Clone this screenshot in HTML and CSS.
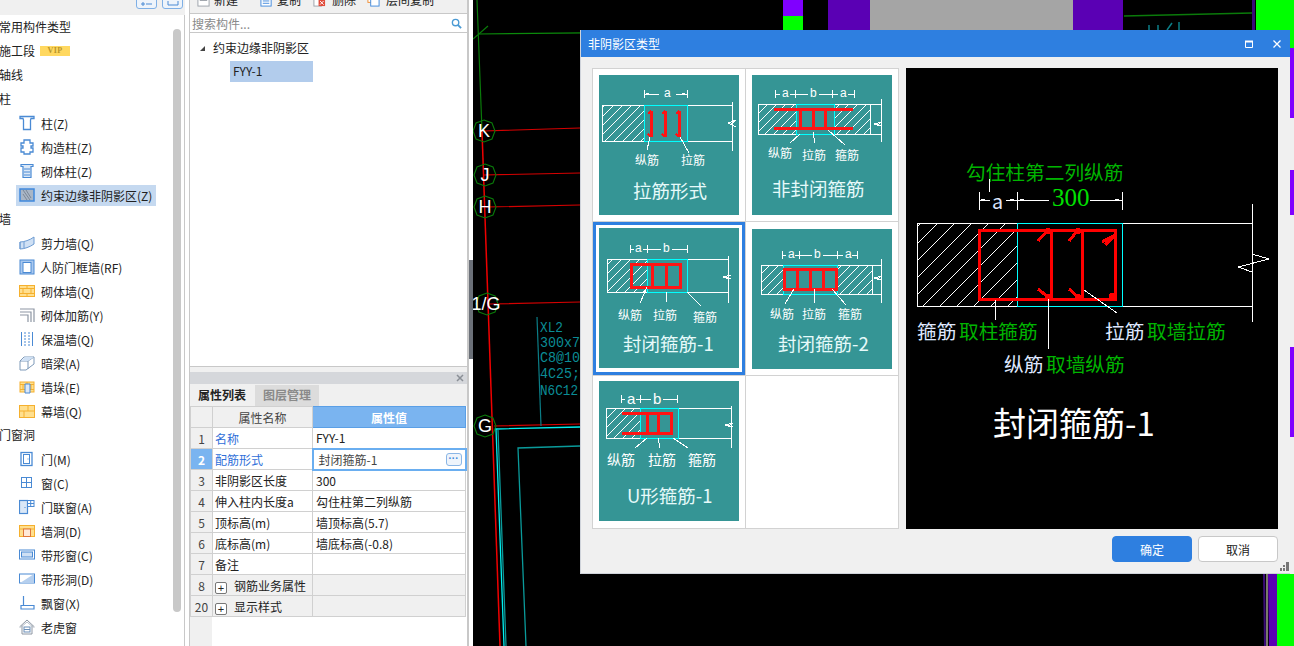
FILE: index.html
```html
<!DOCTYPE html>
<html lang="zh">
<head>
<meta charset="utf-8">
<title>非阴影区类型</title>
<link rel="stylesheet" href="styles.css">
</head>
<body>
<svg class="defs" width="0" height="0" aria-hidden="true">
  <defs>
    <pattern id="h1" width="9" height="9" patternUnits="userSpaceOnUse"><path d="M-1 10L10 -1" stroke="#fff" stroke-width="1"/></pattern>
    <pattern id="h2" width="17" height="17" patternUnits="userSpaceOnUse"><path d="M-1 18L18 -1" stroke="#fff" stroke-width="1"/></pattern>
    <pattern id="brick" width="16" height="16" patternUnits="userSpaceOnUse"><rect width="16" height="16" fill="#ffdf8e"/><path d="M0 5.5h16M0 10.5h16M8 0v5.5M4 5.5v5M12 5.5v5M8 10.5v6" stroke="#f5b02e" fill="none"/></pattern>
  </defs>
</svg>
<div class="app">
  <aside class="side">
    <div class="side-bar">
      <span class="side-btn"><svg width="14" height="6" viewBox="0 0 14 6"><path d="M2 2h2v2H2zM6 3h6" fill="none" stroke="#4a8ad4"/></svg></span>
      <span class="side-btn"><svg width="14" height="6" viewBox="0 0 14 6"><path d="M2 0v4h10V0" fill="none" stroke="#4a8ad4"/></svg></span>
    </div>
    <div class="tree-wrap">
      <div class="scroll-thumb"></div>
      <div class="hd">常用构件类型</div>
      <div class="hd">施工段<span class="vip">VIP</span></div>
      <div class="hd">轴线</div>
      <div class="hd">柱</div>
      <div class="it"><svg class="ic" viewBox="0 0 16 16"><path d="M1 1.5h14v2h-3l-.5 1.500v9.500h-7V5L4 3.500H1z" fill="#fff" stroke="#4a8ad4" stroke-width="1.300"/></svg><span>柱(Z)</span></div>
      <div class="it"><svg class="ic" viewBox="0 0 16 16"><path d="M5 1h6v3h3v3h-2v2h2v4h-3v2H5v-2H2V9h2V7H2V4h3z" fill="#fff" stroke="#4a8ad4" stroke-width="1.300"/></svg><span>构造柱(Z)</span></div>
      <div class="it"><svg class="ic" viewBox="0 0 16 16"><path d="M2 1.500h12v2h-2v11H4v-11H2z" fill="#dbe8f7" stroke="#4a8ad4" stroke-width="1.200"/><path d="M5 6h6M5 9h6M5 12h6" stroke="#4a8ad4"/></svg><span>砌体柱(Z)</span></div>
      <div class="it sel"><svg class="ic" viewBox="0 0 16 16"><rect x="1" y="2" width="14" height="12" fill="#a9b6c6" stroke="#3f88dc" stroke-width="1.500"/><path d="M4 3l7 10M7 3l5 8M4 7l4 6" stroke="#7b8796"/></svg><span>约束边缘非阴影区(Z)</span></div>
      <div class="hd">墙</div>
      <div class="it"><svg class="ic" viewBox="0 0 16 16"><path d="M1 7c4 0 10-2 14-5v7c-4 3-10 5-14 5z" fill="#cfe0f4" stroke="#6c9bd2"/><path d="M1 7l0 7M5 6.500v7" stroke="#6c9bd2"/></svg><span>剪力墙(Q)</span></div>
      <div class="it wide"><svg class="ic" viewBox="0 0 16 16"><rect x="1" y="1" width="14" height="14" fill="#a9c8ee" stroke="#4a8ad4"/><rect x="4" y="3.500" width="8" height="10" fill="#fff" stroke="#4a8ad4"/></svg><span>人防门框墙(RF)</span></div>
      <div class="it"><svg class="ic" viewBox="0 0 16 16"><rect x=".5" y="2.500" width="15" height="11" fill="url(#brick)" stroke="#f5b02e"/></svg><span>砌体墙(Q)</span></div>
      <div class="it"><svg class="ic" viewBox="0 0 16 16"><path d="M1 2h14v13M1 5h11v10M1 8h8v7" fill="none" stroke="#8d96a3" stroke-width="1.200"/></svg><span>砌体加筋(Y)</span></div>
      <div class="it"><svg class="ic" viewBox="0 0 16 16"><path d="M2.500 1v14M13.500 1v14" stroke="#4a8ad4"/><path d="M6 1v14M10 1v14" stroke="#4a8ad4" stroke-dasharray="2 1"/></svg><span>保温墙(Q)</span></div>
      <div class="it"><svg class="ic" viewBox="0 0 16 16"><path d="M1 6l4-4h10v7l-8 6H1z" fill="#fff" stroke="#7e9ab9"/><path d="M1 6h8l6-4M9 6v8" fill="none" stroke="#7e9ab9"/><path d="M2 6l4-4h9l-6 4z" fill="#cfe0f4"/></svg><span>暗梁(A)</span></div>
      <div class="it"><svg class="ic" viewBox="0 0 16 16"><rect x="1" y="3" width="14" height="10" fill="url(#brick)" stroke="#f5b02e"/><path d="M6 5h5v9H6z" fill="#dbe8f7" stroke="#4a8ad4"/></svg><span>墙垛(E)</span></div>
      <div class="it"><svg class="ic" viewBox="0 0 16 16"><rect x=".5" y="2.500" width="15" height="12" fill="#ffdf8e" stroke="#f5b02e"/><path d="M1 8h14M9 3v5M5 8v6" stroke="#f5b02e"/></svg><span>幕墙(Q)</span></div>
      <div class="hd">门窗洞</div>
      <div class="it"><svg class="ic" viewBox="0 0 16 16"><rect x="2" y="1.500" width="11" height="13" fill="#fff" stroke="#4a8ad4" stroke-width="1.300"/><rect x="4.500" y="3.500" width="6" height="9" fill="#fff" stroke="#4a8ad4"/><path d="M9 7.500v1" stroke="#4a8ad4"/></svg><span>门(M)</span></div>
      <div class="it"><svg class="ic" viewBox="0 0 16 16"><rect x="2.500" y="2.500" width="10" height="10" fill="#fff" stroke="#4a8ad4"/><path d="M7.500 2.500v10M2.500 7.500h10" stroke="#4a8ad4"/></svg><span>窗(C)</span></div>
      <div class="it"><svg class="ic" viewBox="0 0 16 16"><rect x=".5" y="1.500" width="8" height="13" fill="#dbe8f7" stroke="#4a8ad4" stroke-width="1.200"/><rect x="8.500" y="1.500" width="6.500" height="6" fill="#fff" stroke="#4a8ad4"/><path d="M11.700 1.500v6M8.500 4.500H15M6 8v1" stroke="#4a8ad4"/></svg><span>门联窗(A)</span></div>
      <div class="it"><svg class="ic" viewBox="0 0 16 16"><rect x=".5" y="2.500" width="15" height="11" fill="#ffdf8e" stroke="#f5b02e"/><path d="M1 6h14" stroke="#f5b02e"/><rect x="4.500" y="6" width="7" height="7.500" fill="#ffe9d8" stroke="#e0763a"/></svg><span>墙洞(D)</span></div>
      <div class="it"><svg class="ic" viewBox="0 0 16 16"><rect x=".5" y="3" width="15" height="9" fill="#fff" stroke="#4a8ad4"/><rect x="2.500" y="5" width="11" height="5" fill="#cfe0f4" stroke="#4a8ad4"/></svg><span>带形窗(C)</span></div>
      <div class="it"><svg class="ic" viewBox="0 0 16 16"><rect x=".5" y="3" width="15" height="9" fill="#fff" stroke="#4a8ad4"/><path d="M1 12L15 3v9z" fill="#b5cfee"/></svg><span>带形洞(D)</span></div>
      <div class="it"><svg class="ic" viewBox="0 0 16 16"><path d="M4.500 1v9.500M4.500 10.500h10.500v3.500H2v-3.500h2.500" fill="none" stroke="#4a8ad4" stroke-width="1.200"/></svg><span>飘窗(X)</span></div>
      <div class="it"><svg class="ic" viewBox="0 0 16 16"><path d="M.5 8L8 1l7.500 7M3 6.500V15h10V6.500" fill="none" stroke="#8d96a3"/><path d="M1.500 8.500L8 3l6.500 5.500" fill="none" stroke="#b4bcc6"/><rect x="5" y="8" width="6" height="5" fill="none" stroke="#6c8fb8"/><path d="M5 10.500h6" stroke="#6c8fb8"/></svg><span>老虎窗</span></div>
      <div class="it"><svg class="ic" viewBox="0 0 16 16"><rect x="1" y="4" width="14" height="10" fill="#fff" stroke="#4a8ad4"/></svg><span></span></div>
    </div>
  </aside>

  <section class="mid">
    <div class="mid-bar">
      <span class="tool"><svg class="tic" viewBox="0 0 14 14"><rect x="1" y="1" width="12" height="12" fill="#fff" stroke="#9aa0a8"/><path d="M3 7h8" stroke="#9aa0a8"/></svg>新建</span>
      <span class="tool t2"><svg class="tic" viewBox="0 0 14 14"><rect x="1" y="1" width="11" height="12" fill="#fff" stroke="#3f88dc"/><path d="M3 5h7M3 7.500h7M3 10h7" stroke="#3f88dc"/></svg>复制</span>
      <span class="tool t3"><svg class="tic" viewBox="0 0 14 14"><rect x="1" y="1" width="8" height="12" fill="#fff" stroke="#9aa0a8"/><rect x="6" y="6" width="7" height="7" fill="#e04b3a"/><path d="M7.500 7.500l4 4M11.500 7.500l-4 4" stroke="#fff"/></svg>删除</span>
      <span class="tool t4"><svg class="tic" viewBox="0 0 14 14"><rect x="1" y="1" width="8" height="8" fill="#fff" stroke="#ee8a2e"/><rect x="4" y="4" width="9" height="9" fill="#fff" stroke="#3f88dc"/></svg>层间复制</span>
    </div>
    <div class="search">
      <span class="search-ph">搜索构件...</span>
      <svg class="search-ic" viewBox="0 0 12 12"><circle cx="5" cy="5" r="3.500" fill="none" stroke="#4a9ad4" stroke-width="1.500"/><path d="M7.500 7.500l3.500 3.500" stroke="#4a9ad4" stroke-width="2"/></svg>
    </div>
    <div class="comp-tree">
      <div class="comp-root"><i class="tri"></i>约束边缘非阴影区</div>
      <div class="comp-leaf">FYY-1</div>
    </div>
    <div class="props">
      <div class="props-head"><svg width="8" height="8" viewBox="0 0 8 8"><path d="M1 1l6 6M7 1l-6 6" stroke="#8a8f96" stroke-width="1.500"/></svg></div>
      <div class="tabs"><span class="tab on">属性列表</span><span class="tab">图层管理</span></div>
      <div class="table-wrap">
        <table class="grid">
          <colgroup><col class="c-n"><col class="c-k"><col class="c-v"></colgroup>
          <tr class="thead"><td class="n"></td><td class="k-h">属性名称</td><td class="v-h">属性值</td></tr>
          <tr><td class="n">1</td><td class="link">名称</td><td>FYY-1</td></tr>
          <tr><td class="n n-on">2</td><td class="link">配筋形式</td><td class="edit"><div class="edit-in"><span>封闭箍筋-1</span><b class="more">···</b></div></td></tr>
          <tr><td class="n">3</td><td>非阴影区长度</td><td>300</td></tr>
          <tr><td class="n">4</td><td>伸入柱内长度a</td><td>勾住柱第二列纵筋</td></tr>
          <tr><td class="n">5</td><td>顶标高(m)</td><td>墙顶标高(5.7)</td></tr>
          <tr><td class="n">6</td><td>底标高(m)</td><td>墙底标高(-0.8)</td></tr>
          <tr><td class="n">7</td><td>备注</td><td></td></tr>
          <tr class="grp"><td class="n">8</td><td><i class="plus">+</i>钢筋业务属性</td><td></td></tr>
          <tr class="grp"><td class="n">20</td><td><i class="plus">+</i>显示样式</td><td></td></tr>
        </table>
      </div>
    </div>
  </section>

  <div class="split"><span class="split-h"></span></div>

  <main class="canvas">
    <svg class="cad" viewBox="473 0 821 646" width="821" height="646">
      <rect x="783" y="0" width="20" height="16" fill="#8000ff"/>
      <rect x="783" y="16" width="20" height="20" fill="#00ff00"/>
      <rect x="828" y="0" width="42" height="30" fill="#5a00b4"/>
      <rect x="870" y="0" width="203" height="30" fill="#a5a5a5"/>
      <rect x="1073" y="0" width="50" height="30" fill="#5a00b4"/>
      <path d="M1252 0h3v30h-3z" fill="#3a0a78"/>
      <rect x="1256" y="0" width="38" height="50" fill="#00ff00"/>
      <rect x="1290" y="48" width="4" height="70" fill="#8000ff"/>
      <rect x="1290" y="118" width="4" height="52" fill="#efefef"/>
      <rect x="1290" y="170" width="4" height="45" fill="#8000ff"/>
      <rect x="1290" y="215" width="4" height="132" fill="#efefef"/>
      <rect x="1290" y="347" width="4" height="90" fill="#8000ff"/>
      <rect x="1290" y="437" width="4" height="137" fill="#efefef"/>
      <path d="M1263 574h2l1 72h-2z" fill="#3a0a78"/>
      <path d="M1266 574h2v72h-2z" fill="#7a7a6a"/>
      <path d="M1268 574h9v72h-8z" fill="#5a00b4"/>
      <rect x="1277" y="574" width="17" height="72" fill="#00ff00"/>
      <path d="M1124 16L1252 13" stroke="#0a7a0a" stroke-width="1.300"/>
      <path d="M1149 30v-5M1158 30v-5M1167 30l5-7M1179 30v-8" stroke="#0b7d86" stroke-width="1.500"/>

      <path d="M478 34L783 31" stroke="#0b8a0b" stroke-width="1.200"/>
      <path d="M477 0L482 131M473 39L488 26" stroke="#0a7a0a" stroke-width="1.200" fill="none"/>

      <g stroke="#d40000" stroke-width="1.200" fill="none">
        <path d="M484 131L580 128M484 175L580 173M486 207L580 205M489 304L580 302M494 426L580 424"/>
      </g>
      <path d="M482 131L500 646" stroke="#f00000" stroke-width="1.500" fill="none"/>
      <g fill="none" stroke="#0a7a0a" stroke-width="1.100">
        <path d="M484 120l8 3 3 8-3 8-8 3-8-3-3-8 3-8zM485 164l8 3 3 8-3 8-8 3-8-3-3-8 3-8zM485 196l8 3 3 8-3 8-8 3-8-3-3-8 3-8zM487 293l8 3 3 8-3 8-8 3-8-3-3-8 3-8zM485 415l8 3 3 8-3 8-8 3-8-3-3-8 3-8z"/>
      </g>
      <g class="axis">
        <text x="484" y="131">K</text><text x="485" y="175">J</text><text x="485" y="207">H</text><text x="486" y="304">1/G</text><text x="485" y="426">G</text>
      </g>
      <path d="M580 427L496 429L504 646" stroke="#00f0f0" stroke-width="1.300" fill="none"/>
      <path d="M498 430L506 646M580 446L518 448L526 646" stroke="#0a9a9a" stroke-width="1.300" fill="none"/>
      <path d="M537 317L541 426" stroke="#0b7d86" stroke-width="1.200"/>
      <g class="beam">
        <text x="540" y="328" textLength="23" lengthAdjust="spacingAndGlyphs">XL2</text>
        <text x="540" y="343" textLength="40" lengthAdjust="spacingAndGlyphs">300x7</text>
        <text x="540" y="358" textLength="40" lengthAdjust="spacingAndGlyphs">C8@10</text>
        <text x="540" y="374" textLength="40" lengthAdjust="spacingAndGlyphs">4C25;</text>
        <text x="540" y="391" textLength="38" lengthAdjust="spacingAndGlyphs">N6C12</text>
      </g>
    </svg>

    <div class="dlg">
      <header class="dlg-title">
        <span>非阴影区类型</span>
        <span class="dlg-ctl">
          <svg width="8" height="8" viewBox="0 0 8 8"><path d="M.5 1.500h7v6h-7z" fill="none" stroke="#fff"/><path d="M0 1.500h8" stroke="#fff" stroke-width="2"/></svg>
          <svg width="8" height="8" viewBox="0 0 8 8"><path d="M.5.500l7 7M7.500.500l-7 7" stroke="#fff" stroke-width="1.300"/></svg>
        </span>
      </header>
      <div class="dlg-body">
        <div class="choices">
          <div class="cell">
            <svg class="thumb" viewBox="0 0 140 140">
              <rect x="3" y="30" width="42" height="36" fill="url(#h1)"/>
              <path d="M3 30H133M3 66H133M3 30V66M133 27V76M129 48l8-3-5 4 5 3z" class="wl"/>
              <path d="M45 19H88M45 15v8M88 15v8" class="wl"/><rect x="47" y="18" width="3" height="2" fill="#fff"/><rect x="83" y="18" width="3" height="2" fill="#fff"/>
              <rect x="60" y="12" width="17" height="14" fill="#359595"/><text x="65" y="19" class="dim">a</text>
              <rect x="45" y="30" width="43" height="36" class="cy"/>
              <path d="M52 36v26M66 36v26M80 36v26" class="rd3"/><path d="M52 36l-3 3M66 36l-3 3M80 36l-3 3M52 62l-3-3M66 62l-3-3M80 62l-3-3" class="rd"/>
              <path d="M51 62L48 75M81 62L90 78" class="wt"/>
              <text x="36" y="85" class="cap">纵筋</text><text x="82" y="85" class="cap">拉筋</text>
              <text x="34" y="117" class="ttl">拉筋形式</text>
            </svg>
          </div>
          <div class="cell">
            <svg class="thumb" viewBox="0 0 140 140">
              <rect x="6" y="29" width="38" height="30" fill="url(#h1)"/><rect x="82" y="29" width="36" height="30" fill="url(#h1)"/>
              <path d="M6 29H129M6 59H129M6 29V59M118 29V59M129 24V67M122 49l8-2-5 3 5 1z" class="wl"/>
              <path d="M23 19H102M23 15v8M43 15v8M80 15v8M102 15v8" class="wl"/>
              <rect x="28" y="12" width="10" height="14" fill="#359595"/><rect x="56" y="12" width="11" height="14" fill="#359595"/><rect x="86" y="12" width="10" height="14" fill="#359595"/>
              <text x="30" y="19" class="dim">a</text><text x="58" y="19" class="dim">b</text><text x="88" y="19" class="dim">a</text>
              <rect x="44" y="29" width="38" height="30" class="cy"/>
              <path d="M22 34H101M22 53H101M48 34V53M61 34V53M73 34V53" class="rd3"/>
              <path d="M48 59L38 68M61 57L63 68M76 55L93 70" class="wt"/>
              <text x="16" y="78" class="cap">纵筋</text><text x="50" y="80" class="cap">拉筋</text><text x="83" y="80" class="cap">箍筋</text>
              <text x="20" y="115" class="ttl">非封闭箍筋</text>
            </svg>
          </div>
          <div class="cell sel">
            <svg class="thumb t-up1" viewBox="0 0 140 140">
              <rect x="8" y="31" width="40" height="33" fill="url(#h1)"/>
              <path d="M8 31H129M8 64H129M8 31V64M129 28V75M124 49l8-2-5 3 5 1z" class="wl"/>
              <path d="M31 21H88M31 17v8M48 17v8M88 17v8" class="wl"/>
              <rect x="35" y="14" width="9" height="14" fill="#359595"/><rect x="62" y="14" width="11" height="14" fill="#359595"/>
              <text x="36" y="21" class="dim">a</text><text x="64" y="21" class="dim">b</text>
              <rect x="48" y="31" width="40" height="33" class="cy"/>
              <rect x="32" y="36" width="49" height="23" class="rd3"/>
              <path d="M53 36V59M67 36V59" class="rd3"/>
              <path d="M48 59L41 75M67 64V74M88 64L102 78" class="wt"/>
              <text x="19" y="87" class="cap">纵筋</text><text x="54" y="87" class="cap">拉筋</text><text x="94" y="89" class="cap">箍筋</text>
              <text x="24" y="117" class="ttl">封闭箍筋-1</text>
            </svg>
          </div>
          <div class="cell">
            <svg class="thumb t-down" viewBox="0 0 140 140">
              <rect x="9" y="36" width="22" height="29" fill="url(#h1)"/><rect x="85" y="36" width="35" height="29" fill="url(#h1)"/>
              <path d="M9 36H129M9 65H129M9 36V65M120 36V65M129 30V74M122 49l8-2-5 3 5 1z" class="wl"/>
              <path d="M30 26H105M30 22v8M47 22v8M85 22v8M105 22v8" class="wl"/>
              <rect x="34" y="19" width="9" height="14" fill="#359595"/><rect x="60" y="19" width="11" height="14" fill="#359595"/><rect x="91" y="19" width="9" height="14" fill="#359595"/>
              <text x="36" y="26" class="dim">a</text><text x="62" y="26" class="dim">b</text><text x="93" y="26" class="dim">a</text>
              <rect x="31" y="36" width="54" height="29" class="cy"/>
              <rect x="32" y="40" width="52" height="20" class="rd3"/>
              <path d="M45 40V60M58 40V60M71 40V60" class="rd3"/>
              <path d="M42 60L33 75M62 60V74M80 60L94 76" class="wt"/>
              <text x="18" y="85" class="cap">纵筋</text><text x="50" y="85" class="cap">拉筋</text><text x="86" y="85" class="cap">箍筋</text>
              <text x="26" y="116" class="ttl">封闭箍筋-2</text>
            </svg>
          </div>
          <div class="cell">
            <svg class="thumb t-up2" viewBox="0 0 140 140">
              <rect x="7" y="27" width="34" height="30" fill="url(#h1)"/>
              <path d="M7 27H132M7 57H132M7 27V57M132 25V67M126 44l8-2-5 3 5 1z" class="wl"/>
              <path d="M22 18H78M22 14v8M41 14v8M78 14v8" class="wl"/>
              <rect x="26" y="10" width="11" height="16" fill="#359595"/><rect x="52" y="10" width="12" height="16" fill="#359595"/>
              <text x="28" y="18" class="dim d14">a</text><text x="54" y="18" class="dim d14">b</text>
              <rect x="41" y="27" width="38" height="30" class="cy"/>
              <path d="M23 32H72V52H23M48 32V52M59 32V52" class="rd3"/>
              <path d="M48 57L36 67M59 57L61 67M74 57L89 67" class="wt"/>
              <text x="8" y="79" class="cap c14">纵筋</text><text x="49" y="79" class="cap c14">拉筋</text><text x="89" y="79" class="cap c14">箍筋</text>
              <text x="28" y="116" class="ttl">U形箍筋-1</text>
            </svg>
          </div>
          <div class="cell"></div>
        </div>
        <svg class="preview" viewBox="0 0 372 461">
          <text x="60" y="103" class="big gr">勾住柱第二列纵筋</text>
          <path d="M83 111V124M73 124V142M111 124V142M216 124V142" class="wt"/>
          <path d="M73 132H84M100 132H111M111 132H143M184 132H216" class="wt"/>
          <path d="M75 131h4v2h-4zM104 131h4v2h-4zM114 131h4v2h-4zM209 131h4v2h-4z" fill="#fff"/>
          <text x="86" y="132" class="big bl">a</text>
          <text x="146" y="129" class="n300">300</text>
          <rect x="11" y="155" width="100" height="83" fill="url(#h2)"/>
          <path d="M11 155H346M11 238H346M11 155V238M346 136V254" class="wt"/>
          <path d="M346 186l17 5-31 8 14 5" class="wt"/>
          <rect x="111" y="155" width="105" height="83" class="cy"/>
          <rect x="73.500" y="162" width="136" height="69" class="rd4"/>
          <path d="M145 162V231M176 162V231" class="rd4"/>
          <path d="M142 162L132 173M172 162L163 173M209 167L196 174M207 169L199 177M142 229L132 221M172 229L163 221" class="rd4"/>
          <circle cx="142" cy="229" r="3" fill="#f00"/><circle cx="172" cy="229" r="3" fill="#f00"/><circle cx="206" cy="228" r="3" fill="#f00"/><circle cx="142" cy="163" r="3" fill="#f00"/><circle cx="172" cy="163" r="3" fill="#f00"/>
          <path d="M89 232V252M142 231V281M178 222L211 245" class="wt"/>
          <text x="11" y="262" class="big bl">箍筋</text><text x="53" y="262" class="big gr">取柱箍筋</text>
          <text x="199" y="262" class="big bl">拉筋</text><text x="241" y="262" class="big gr">取墙拉筋</text>
          <text x="98" y="295" class="big bl">纵筋</text><text x="140" y="295" class="big gr">取墙纵筋</text>
          <text x="87" y="355" class="huge">封闭箍筋-1</text>
        </svg>
      </div>
      <footer class="dlg-foot">
        <button class="btn pri">确定</button>
        <button class="btn">取消</button>
        <svg class="grip" width="9" height="9" viewBox="0 0 9 9"><path d="M6 0h3v3H6zM3 3h2v2H3zM6 3h3v3H6zM0 6h2v3H0zM3 6h2v3H3zM6 6h3v3H6z" fill="#777"/></svg>
      </footer>
    </div>
  </main>
</div>
</body>
</html>
```
FILE: styles.css
```css
* { box-sizing: border-box; }
html, body {
  margin: 0;
  width: 1294px;
  height: 646px;
  overflow: hidden;
  background: #fff;
  font-family: "Noto Sans CJK SC", "Liberation Sans", sans-serif;
  font-size: 12px;
  color: #222;
}
.defs { position: absolute; }
.app { display: flex; width: 1294px; height: 646px; overflow: hidden; }

/* left tree */
.side { width: 189px; flex: none; display: flex; flex-direction: column; background: #fff; overflow: hidden; }
.side-bar {
  height: 15px;
  flex: none;
  width: 185px;
  background: #f0f0f0;
  display: flex;
  justify-content: flex-end;
  align-items: flex-end;
  gap: 5px;
  padding: 0 2px 6px 0;
}
.side-btn {
  width: 21px;
  height: 16px;
  border: 1px solid #7fb0e6;
  border-radius: 3px;
  background: #eef4fb;
  display: flex;
  align-items: flex-end;
  justify-content: center;
  padding-bottom: 1px;
}
.tree-wrap { position: relative; flex: 1; width: 185px; border-right: 1px solid #c8c8c8; overflow: hidden; }
.scroll-thumb { position: absolute; left: 173px; top: 14px; width: 8px; height: 583px; background: #c8c8c8; border-radius: 4px; }
.hd { height: 24px; line-height: 24px; margin-left: -1px; white-space: nowrap; display: flex; align-items: center; }
.vip {
  width: 30px;
  height: 10px;
  margin-left: 5px;
  background: #ffd860;
  color: #b8952a;
  font: 700 8px/10px "Liberation Serif", serif;
  letter-spacing: .5px;
  text-align: center;
}
.it { height: 24px; display: flex; align-items: center; gap: 6px; padding-left: 19px; white-space: nowrap; }
.it.sel { position: relative; }
.it.sel::before { content: ""; position: absolute; left: 16px; top: 2px; width: 140px; height: 21px; background: #c5d9f0; }
.it.sel > * { position: relative; }
.it.wide { gap: 5px; }
.ic { width: 16px; height: 16px; flex: none; }

/* middle column */
.mid {
  width: 280px;
  flex: none;
  display: flex;
  flex-direction: column;
  border-left: 1px solid #c8c8c8;
  border-right: 2px solid #c8c8c8;
  background: #f0f0f0;
}
.mid-bar {
  height: 13px;
  flex: none;
  display: flex;
  align-items: flex-end;
  padding: 0 0 6px 7px;
  background: #f0f0f0;
}
.tool { display: flex; align-items: center; height: 14px; gap: 4px; line-height: 14px; white-space: nowrap; }
.tic { width: 13px; height: 13px; flex: none; }
.t2 { margin-left: 22px; }
.t3 { margin-left: 12px; gap: 6px; }
.t4 { margin-left: 11px; gap: 6px; }
.search {
  height: 20px;
  flex: none;
  background: #fff;
  border-top: 1px solid #c8c8c8;
  border-bottom: 1px solid #c8c8c8;
  display: flex;
  align-items: center;
  justify-content: space-between;
  padding: 0 5px 0 2px;
}
.search-ph { color: #8a8a8a; font-size: 12px; }
.search-ic { width: 11px; height: 11px; }
.comp-tree { height: 334px; flex: none; background: #fff; border-bottom: 1px solid #c8c8c8; padding-top: 4px; }
.comp-root { height: 21px; line-height: 21px; padding-left: 23px; position: relative; }
.tri { position: absolute; left: 10px; top: 9px; border-style: solid; border-width: 0 0 5px 5px; border-color: transparent transparent #444 transparent; }
.comp-leaf { margin-left: 40px; width: 83px; height: 21px; line-height: 19px; margin-top: 3px; padding-left: 3px; background: #b2ccec; }

.props { flex: 1; display: flex; flex-direction: column; margin-top: 5px; min-height: 0; }
.props-head { height: 12px; flex: none; background: #d5d7db; display: flex; align-items: center; justify-content: flex-end; padding-right: 3px; }
.tabs { height: 22px; flex: none; display: flex; background: #f0f0f0; padding-top: 1px; }
.tab { width: 65px; background: #dcdcdc; color: #8a8a8a; text-align: center; line-height: 19px; font-weight: 700; border-right: 1px solid #f0f0f0; }
.tab.on { background: #f0f0f0; color: #222; }
.table-wrap { flex: 1; background: linear-gradient(to right, #f0f0f0 22px, #fff 22px); padding-right: 1px; }
.grid { border-collapse: collapse; table-layout: fixed; width: 275px; }
.c-n { width: 22px; }
.c-k { width: 100px; }
.c-v { width: 153px; }
.grid td { height: 21px; padding: 0 0 0 2px; border: 1px solid #d0d0d0; background: #fff; white-space: nowrap; overflow: hidden; line-height: 19px; }
.grid td:nth-child(3) { padding-left: 3px; }
.grid tr { height: 21px; }
.grid td.n { background: #f0f0f0; color: #444; text-align: center; padding: 0; }
.grid td.n-on { background: #7ab4f0; color: #fff; font-weight: 700; }
.grid .thead td { background: #f0f0f0; text-align: center; padding: 0; color: #444; }
.grid .thead td.v-h { background: #7ab4f0; color: #fff; font-weight: 700; border-color: #5a9fe6; }
.link { color: #2f6fd9; }
.grid td.edit { padding: 0; border: 2px solid #6aaef0; }
.edit-in { display: flex; justify-content: space-between; align-items: center; padding: 0 3px 0 5px; color: #444; height: 17px; }
.more { width: 16px; height: 13px; border: 1px solid #8ab6e6; border-radius: 3px; background: #eef4fb; color: #3f88dc; font: 700 10px/9px "Liberation Sans", sans-serif; text-align: center; }
.grid .grp td { background: #f0f0f0; }
.plus {
  display: inline-block;
  width: 12px;
  height: 12px;
  margin: 0 7px 0 0;
  border: 1px solid #777;
  border-radius: 2px;
  background: #fff;
  font: 400 11px/10px "Liberation Sans", sans-serif;
  text-align: center;
  vertical-align: -1px;
}

/* splitter */
.split { width: 4px; flex: none; background: #fff; display: flex; align-items: center; }
.split-h { display: block; width: 100%; height: 99px; margin-top: -27px; background: #6b7078; }

/* canvas */
.canvas { flex: 1; position: relative; background: #000; overflow: hidden; min-width: 0; }
.cad { display: block; }
.axis text { fill: #fff; font: 400 18px "Liberation Sans", sans-serif; text-anchor: middle; }
.beam text { fill: #0b8c96; font: 400 14px "Liberation Mono", monospace; }

/* dialog */
.dlg {
  position: absolute;
  left: 107px;
  top: 30px;
  width: 710px;
  height: 544px;
  background: #f0f0f0;
  border-left: 1px solid #cfd3da;
  border-bottom: 1px solid #cfd3da;
  display: flex;
  flex-direction: column;
}
.dlg-title {
  height: 27px;
  flex: none;
  background: #2e7fe0;
  color: #fff;
  display: flex;
  align-items: center;
  justify-content: space-between;
  padding: 0 9px 0 7px;
}
.dlg-ctl { display: flex; gap: 20px; }
.dlg-ctl svg { display: block; }
.dlg-body { display: flex; gap: 7px; padding: 11px 12px 0 11px; height: 472px; flex: none; }
.choices {
  width: 307px;
  height: 461px;
  flex: none;
  background: #d2d2d2;
  border: 1px solid #d2d2d2;
  display: grid;
  grid-template-columns: 152px 152px;
  grid-template-rows: 152px 153px 152px;
  gap: 1px;
}
.cell { background: #fff; display: flex; align-items: center; justify-content: center; }
.cell.sel { box-shadow: inset 0 0 0 3px #2e7fe0; }
.thumb { width: 140px; height: 140px; background: #359595; display: block; shape-rendering: crispEdges; }
.t-up1 { margin-top: -1px; }
.t-down { margin-top: 1px; }
.t-up2 { margin-top: -2px; }
.preview { width: 372px; height: 461px; flex: none; background: #000; display: block; shape-rendering: crispEdges; }
.dlg-foot { flex: 1; display: flex; justify-content: flex-end; align-items: flex-start; gap: 6px; padding: 7px 12px 0 0; position: relative; }
.btn {
  width: 80px;
  height: 26px;
  border: 1px solid #c8c8c8;
  border-radius: 4px;
  background: #fff;
  color: #222;
  font: 400 12px "Noto Sans CJK SC", sans-serif;
  padding: 0;
}
.btn.pri { background: #2e7fe0; border-color: #2e7fe0; color: #fff; }
.grip { position: absolute; right: 1px; bottom: 2px; }

/* diagram strokes and labels */
.wl { fill: none; stroke: #fff; stroke-width: 1; }
.wt { fill: none; stroke: #fff; stroke-width: 1; }
.cy { fill: none; stroke: #00ffff; stroke-width: 1; }
.rd { fill: none; stroke: #ff1414; stroke-width: 2; }
.rd3 { fill: none; stroke: #ff1414; stroke-width: 3; }
.rd4 { fill: none; stroke: #f00; stroke-width: 3; }
svg text { dominant-baseline: central; }
.cap { fill: #fff; font-size: 12px; transform: translateY(-1px); }
.cap.c14 { font-size: 14px; }
.dim { fill: #fff; font: 400 12px "Liberation Sans", sans-serif; transform: translateY(-1px); }
.dim.d14 { font-size: 15px; }
.ttl { fill: #e6fafa; font-size: 18.500px; transform: translateY(-2px); }
.big { font-size: 19.700px; }
.gr { fill: #00b400; }
.bl { fill: #dfe8ff; }
.n300 { fill: #00e000; font: 400 25px "Liberation Serif", serif; }
.huge { fill: #fff; font-size: 33px; transform: translateY(-1px); }
```
